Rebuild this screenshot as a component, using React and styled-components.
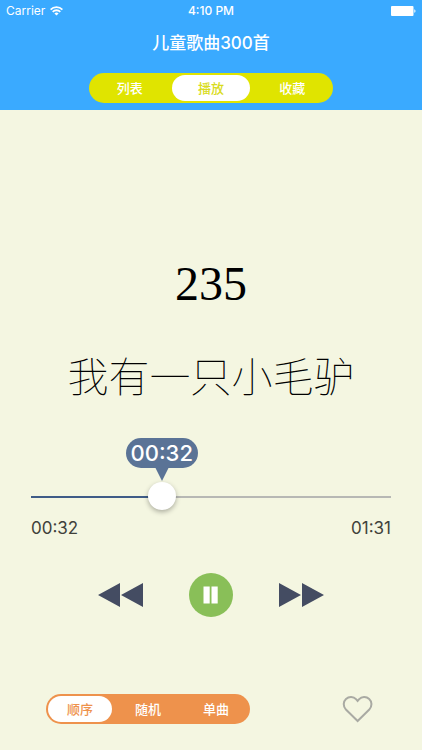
import styled, {createGlobalStyle} from "styled-components";
import {useState} from "react";

const GlobalStyle = createGlobalStyle`
    * {
        box-sizing: border-box;
    }
    body {
        margin: 0;
        background: #f4f6e1;
        font-family: Inter, "Noto Sans CJK SC", sans-serif;
    }
    button {
        padding: 0;
        border: none;
        background: none;
        cursor: pointer;
    }
    svg {
        display: block;
    }
`

const Page = styled.div`
    display: flex;
    flex-direction: column;
    min-height: 100vh;
`

const Header = styled.header`
    display: flex;
    flex-direction: column;
    align-items: center;
    padding-bottom: 7px;
    background: #3aaaff;
    color: white;
`

const StatusBar = styled.div`
    display: grid;
    grid-template-columns: 1fr auto 1fr;
    align-items: center;
    width: 100%;
    height: 22px;
    padding: 0 6px;
    font-size: 12px;
    line-height: 22px;
`

const Carrier = styled.span`
    display: flex;
    align-items: center;
    gap: 5px;
`

const Clock = styled.span`
    font-weight: 500;
`

const Battery = styled.svg`
    justify-self: end;
`

const Title = styled.h1`
    margin: 9px 0 18px;
    font-size: 17px;
    font-weight: 500;
    line-height: 24px;
`

const Segments = styled.div`
    display: grid;
    grid-template-columns: repeat(3, 1fr);
    width: ${props => props.$width};
    height: 30px;
    border-radius: 15px;
    background: ${props => props.$color};
`

const Segment = styled.label`
    position: relative;
    margin: 2px;
    border-radius: 13px;
    color: white;
    font-size: 13px;
    font-weight: 500;
    line-height: 26px;
    text-align: center;
    cursor: pointer;

    &:has(input:checked) {
        background: white;
        color: ${props => props.$color};
    }
    input {
        position: absolute;
        inset: 0;
        margin: 0;
        opacity: 0;
    }
`

const Player = styled.main`
    display: flex;
    flex: 1;
    flex-direction: column;
    padding-top: 144px;
`

const SongNumber = styled.p`
    margin: 0;
    color: black;
    font-family: "Liberation Serif", serif;
    font-size: 48px;
    font-weight: 400;
    line-height: 60px;
    text-align: center;
`

const SongName = styled.h2`
    margin: 30px 0 34px;
    color: black;
    font-family: "Noto Sans CJK SC", sans-serif;
    font-size: 41px;
    font-weight: 100;
    line-height: 60px;
    text-align: center;
`

const Progress = styled.div`
    position: relative;
    margin: 0 31px;
    padding-top: 44px;
`

const Bubble = styled.output`
    position: absolute;
    top: 0;
    width: 72px;
    height: 30px;
    border-radius: 15px;
    background: #5a7396;
    color: white;
    font-size: 22px;
    font-weight: 500;
    line-height: 30px;
    text-align: center;
    transform: translateX(-50%);

    &::after {
        content: "";
        position: absolute;
        top: 29px;
        left: 50%;
        border: 7px solid transparent;
        border-top: 14px solid #5a7396;
        border-bottom: none;
        transform: translateX(-50%);
    }
`

const Slider = styled.input`
    display: block;
    width: 100%;
    height: 28px;
    margin: 0;
    background: linear-gradient(#3f5c87, #3f5c87) 0 14px / var(--played) 2px no-repeat,
        linear-gradient(#b7b8b4, #b7b8b4) 0 14px / 100% 2px no-repeat;
    appearance: none;
    cursor: pointer;

    &::-webkit-slider-thumb {
        width: 28px;
        height: 28px;
        border-radius: 50%;
        background: white;
        box-shadow: 0 2px 5px rgba(0, 0, 0, 0.3);
        appearance: none;
    }
`

const Times = styled.div`
    display: flex;
    justify-content: space-between;
    margin-top: 6px;
    color: #40413b;
    font-size: 17px;
    line-height: 24px;
`

const Controls = styled.div`
    display: flex;
    align-items: center;
    justify-content: center;
    gap: 46px;
    margin: 33px 0;
`

const PlayButton = styled.button`
    display: flex;
    align-items: center;
    justify-content: center;
    width: 44px;
    height: 44px;
    border-radius: 50%;
    background: #89bf58;
`

const Footer = styled.footer`
    display: flex;
    align-items: center;
    justify-content: space-between;
    margin-top: auto;
    padding: 0 48px 26px 46px;
`

const formatTime = (seconds) => {
    const min = String(Math.floor(seconds / 60)).padStart(2, '0');
    const sec = String(seconds % 60).padStart(2, '0');
    return `${min}:${sec}`;
}

function SegmentedControl({name, label, options, value, onChange, color, textColor, width}) {
    return (
        <Segments role="radiogroup" aria-label={label} $color={color} $width={width}>
            {options.map(option => (
                <Segment key={option} $color={textColor}>
                    <input type="radio" name={name} checked={value === option} onChange={() => onChange(option)}/>
                    {option}
                </Segment>
            ))}
        </Segments>
    )
}

export default function App() {
    const duration = 91;
    const [tab, setTab] = useState('播放');
    const [mode, setMode] = useState('顺序');
    const [time, setTime] = useState(32);
    const [playing, setPlaying] = useState(true);
    const [liked, setLiked] = useState(false);

    // the thumb is 28px wide, so its centre travels between 14px and 100% - 14px
    const played = `calc(14px + (100% - 28px) * ${time / duration})`;

    return (
        <Page>
            <GlobalStyle/>
            <Header>
                <StatusBar>
                    <Carrier>
                        Carrier
                        <svg width="13" height="10" viewBox="0 0 13 10" fill="none" stroke="white" strokeWidth="1.8">
                            <path d="M0.6 3.6a8.4 8.4 0 0 1 11.8 0"/>
                            <path d="M2.7 5.8a5.4 5.4 0 0 1 7.6 0"/>
                            <path d="M6.5 9.6L4.4 7.5a3 3 0 0 1 4.2 0z" fill="white" stroke="none"/>
                        </svg>
                    </Carrier>
                    <Clock>4:10 PM</Clock>
                    <Battery width="25" height="10" viewBox="0 0 25 10" fill="white">
                        <rect width="22.5" height="10" rx="1"/>
                        <path d="M23.3 3.2c1.6.4 1.6 3.2 0 3.6z"/>
                    </Battery>
                </StatusBar>
                <Title>儿童歌曲300首</Title>
                <SegmentedControl
                    name="tab"
                    label="页面"
                    options={['列表', '播放', '收藏']}
                    value={tab}
                    onChange={setTab}
                    color="#e0e400"
                    textColor="#d9dc1e"
                    width="244px"
                />
            </Header>

            <Player>
                <SongNumber>235</SongNumber>
                <SongName>我有一只小毛驴</SongName>

                <Progress>
                    <Bubble style={{left: played}}>{formatTime(time)}</Bubble>
                    <Slider
                        type="range"
                        aria-label="播放进度"
                        min="0"
                        max={duration}
                        value={time}
                        onChange={e => setTime(Number(e.target.value))}
                        style={{'--played': played}}
                    />
                    <Times>
                        <span>{formatTime(time)}</span>
                        <span>{formatTime(duration)}</span>
                    </Times>
                </Progress>

                <Controls>
                    <button aria-label="上一首">
                        <svg width="45" height="24" viewBox="0 0 45 24" fill="#444c62">
                            <path d="M0 12L22 0v24zM23 12L45 0v24z"/>
                        </svg>
                    </button>
                    <PlayButton aria-label={playing ? '暂停' : '播放'} onClick={() => setPlaying(!playing)}>
                        <svg width="16" height="18" viewBox="0 0 16 18" fill="white">
                            {playing ? <path d="M0.5 0.5h6.200v17H0.5zM8.500 0.5h6.200v17h-6.200z"/> : <path d="M2 0l13 9-13 9z"/>}
                        </svg>
                    </PlayButton>
                    <button aria-label="下一首">
                        <svg width="45" height="24" viewBox="0 0 45 24" fill="#444c62">
                            <path d="M22 12L0 0v24zM45 12L23 0v24z"/>
                        </svg>
                    </button>
                </Controls>

                <Footer>
                    <SegmentedControl
                        name="mode"
                        label="播放模式"
                        options={['顺序', '随机', '单曲']}
                        value={mode}
                        onChange={setMode}
                        color="#ee924c"
                        textColor="#ee924c"
                        width="204px"
                    />
                    <button aria-label="收藏" aria-pressed={liked} onClick={() => setLiked(!liked)}>
                        <svg width="32" height="28" viewBox="0 0 32 28" fill={liked ? '#a9aaa3' : 'none'} stroke="#a9aaa3" strokeWidth="2">
                            <path d="M15.600 26L3.900 14.500C1 11.500 1 6.600 4 3.900C7 1.200 11.500 1.400 14 4.200L15.600 6L17.200 4.200C19.700 1.400 24.200 1.200 27.200 3.900C30.200 6.600 30.200 11.500 27.300 14.500Z"/>
                        </svg>
                    </button>
                </Footer>
            </Player>
        </Page>
    )
}
